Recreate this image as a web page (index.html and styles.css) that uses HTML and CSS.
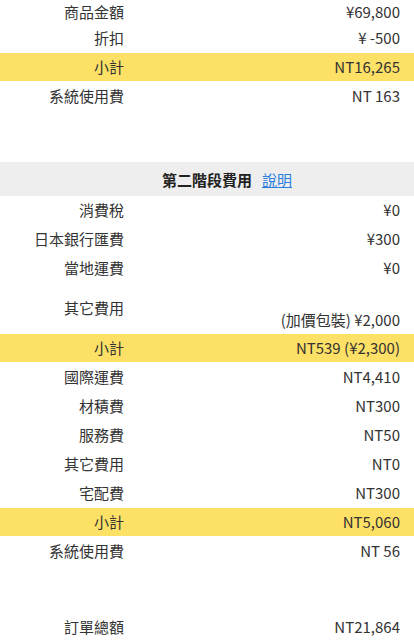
FILE: index.html
```html
<!DOCTYPE html>
<html lang="zh-Hant">
<head>
<meta charset="utf-8">
<link rel="stylesheet" href="styles.css">
</head>
<body>
<div class="page">
  <section class="group">
    <div class="row first"><div class="label">商品金額</div><div class="value">¥69,800</div></div>
    <div class="row"><div class="label">折扣</div><div class="value">¥ -500</div></div>
    <div class="row hl"><div class="label">小計</div><div class="value">NT16,265</div></div>
    <div class="row"><div class="label">系統使用費</div><div class="value">NT 163</div></div>
  </section>
  <div class="spacer-a"></div>
  <div class="head">
    <span></span>
    <span class="head-title">第二階段費用</span>
    <a class="head-link" href="#">說明</a>
  </div>
  <section class="group">
    <div class="row"><div class="label">消費稅</div><div class="value">¥0</div></div>
    <div class="row"><div class="label">日本銀行匯費</div><div class="value">¥300</div></div>
    <div class="row"><div class="label">當地運費</div><div class="value">¥0</div></div>
    <div class="row tall"><div class="label">其它費用</div><div class="value multi"><span class="blank">&nbsp;</span><span>(加價包裝) ¥2,000</span></div></div>
    <div class="row hl"><div class="label">小計</div><div class="value">NT539 (¥2,300)</div></div>
    <div class="row"><div class="label">國際運費</div><div class="value">NT4,410</div></div>
    <div class="row"><div class="label">材積費</div><div class="value">NT300</div></div>
    <div class="row"><div class="label">服務費</div><div class="value">NT50</div></div>
    <div class="row"><div class="label">其它費用</div><div class="value">NT0</div></div>
    <div class="row"><div class="label">宅配費</div><div class="value">NT300</div></div>
    <div class="row hl"><div class="label">小計</div><div class="value">NT5,060</div></div>
    <div class="row"><div class="label">系統使用費</div><div class="value">NT 56</div></div>
  </section>
  <div class="spacer-b"></div>
  <section class="group">
    <div class="row"><div class="label">訂單總額</div><div class="value">NT21,864</div></div>
  </section>
</div>
</body>
</html>
```

FILE: styles.css
```css
html, body {
  margin: 0;
  padding: 0;
  background: #ffffff;
}
body {
  font-family: "Noto Sans CJK TC", "Noto Sans", sans-serif;
  font-size: 15px;
  color: #333333;
  overflow: hidden;
}
.row {
  display: grid;
  grid-template-columns: 124px 1fr;
  height: 28px;
  line-height: 28px;
  border-bottom: 1px solid #ffffff;
  align-items: center;
}
.row.first {
  height: 23px;
  line-height: 23px;
}
.row.hl {
  background: #fde066;
}
.label {
  text-align: right;
  white-space: nowrap;
}
.value {
  text-align: right;
  padding-right: 14px;
  white-space: nowrap;
}
.row.tall {
  height: 50px;
  line-height: 22px;
}
.value.multi {
  display: flex;
  flex-direction: column;
  align-items: flex-end;
  padding-top: 4px;
  align-self: start;
}
.spacer-a {
  height: 51px;
}
.head {
  display: grid;
  grid-template-columns: 1fr auto 1fr;
  align-items: center;
  height: 34px;
  background: #eeeeee;
  font-weight: 700;
}
.head-title {
  color: #222222;
}
.head-link {
  justify-self: start;
  margin-left: 10px;
  color: #2a7fde;
  font-weight: 400;
  text-decoration: underline;
}
.spacer-b {
  height: 47px;
}
```
